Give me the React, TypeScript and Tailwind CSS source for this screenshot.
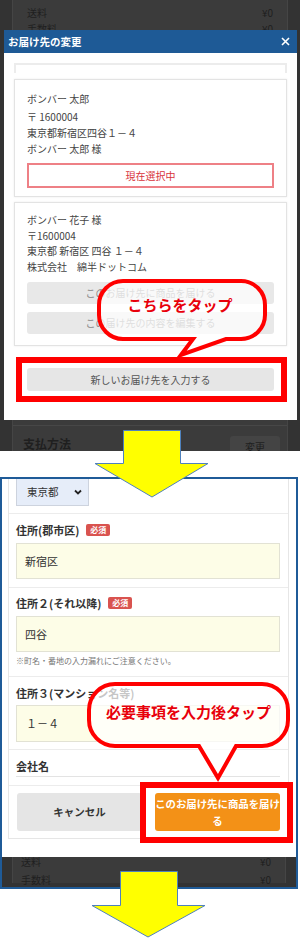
import React from 'react';

const jp = "font-['Noto_Sans_CJK_JP','Noto_Sans',sans-serif]";

function Badge() {
  return (
    <span className="ml-[7px] inline-flex items-center h-[12px] px-[4px] rounded-[2px] bg-[#d9534f] text-white text-[8px] font-bold leading-none">
      必須
    </span>
  );
}

function Field({ label, required, value, h = 36 }: { label: string; required?: boolean; value: string; h?: number }) {
  return (
    <>
      <div className="flex items-center h-[14px] text-[11px] leading-[14px] font-bold text-[#333]">
        {label}
        {required && <Badge />}
      </div>
      <div
        className="mt-[6px] flex items-center pl-[8px] bg-[#fdfde7] border border-[#e2e2d4] text-[11px] text-[#333]"
        style={{ height: h }}
      >
        {value}
      </div>
    </>
  );
}

function ModalPanel() {
  return (
    <div className="relative h-[451px] bg-[#333333] overflow-hidden">
      {/* page behind the overlay */}
      <div className="mx-[12px] h-full bg-[#3b3b3b] border-x border-[#454545] flex flex-col text-[#1f1f1f]">
        <div className="pt-[5px] px-[14px] text-[10px] leading-[16px]">
          <div className="flex justify-between"><span>送料</span><span>¥0</span></div>
          <div className="flex justify-between"><span>手数料</span><span>¥0</span></div>
        </div>
        <div className="flex-1" />
        <div className="h-[26px] border-t border-[#474747] flex items-start justify-between pl-[10px] pr-[7px] pt-[10px]">
          <span className="text-[12px] font-bold leading-[16px]">支払方法</span>
          <span className="w-[50px] h-[20px] bg-[#444] rounded-[3px] text-[10px] text-center leading-[22px]">変更</span>
        </div>
      </div>

      {/* modal */}
      <div className="absolute left-[4px] top-[30px] w-[293px] h-[390px] bg-white flex flex-col">
        <div className="h-[23px] bg-[#1e5a96] flex items-center justify-between pl-[4px] pr-[7px]">
          <span className="text-white text-[10.5px] font-bold">お届け先の変更</span>
          <svg width="9" height="9" viewBox="0 0 9 9" fill="none" stroke="white" strokeWidth="1.6">
            <path d="M1 1L8 8M8 1L1 8" />
          </svg>
        </div>
        <div className="px-[10px] pt-[10px] text-[10px] text-[#444]">
          <div className="h-[10px] border-t-2 border-x-2 border-[#ececec]" />

          <div className="mt-[6px] border border-[#e3e3e3] shadow-[0_0_2px_rgba(0,0,0,0.08)] pl-[12px] pr-[12px] pt-[11px] pb-[8px] leading-[16px]">
            <div className="mb-[2px]">ボンバー 太郎</div>
            <div>〒 1600004</div>
            <div>東京都新宿区四谷１－４</div>
            <div>ボンバー 太郎 様</div>
            <div className="mt-[6px] h-[25px] border-2 border-solid border-[#ee8086] flex items-center justify-center text-[#d8323a]">
              現在選択中
            </div>
          </div>

          <div className="mt-[5px] border border-[#e3e3e3] shadow-[0_0_2px_rgba(0,0,0,0.08)] pl-[12px] pr-[12px] pt-[9px] pb-[11px] leading-[15.5px]">
            <div>ボンバー 花子 様</div>
            <div>〒1600004</div>
            <div>東京都 新宿区 四谷 １－４</div>
            <div>株式会社　綿半ドットコム</div>
            <div className="mt-[8px] flex flex-col gap-[8px] text-[#8a8a8a]">
              <div className="h-[22px] bg-[#e8e8e8] rounded-[3px] flex items-center justify-center">このお届け先に商品を届ける</div>
              <div className="h-[22px] bg-[#e8e8e8] rounded-[3px] flex items-center justify-center">この届け先の内容を編集する</div>
            </div>
          </div>

          <div className="mx-[13px] mt-[22px] h-[23px] bg-[#e6e6e6] rounded-[3px] flex items-center justify-center text-[#555]">
            新しいお届け先を入力する
          </div>
        </div>
      </div>
    </div>
  );
}

function FormPanel() {
  return (
    <div className="mt-[26px] w-[298px] h-[412px] border-2 border-[#1f5b98] bg-white flex flex-col overflow-hidden">
      <div className="ml-[6px] mr-[7px] border-x border-b border-[#e6e6e6]">
        <div className="h-[35px] border-b border-[#ececec] px-[7px]">
          <div className="w-[73px] h-[27px] bg-[#e6edf9] border border-[#cdd3de] border-t-0 flex items-center justify-between pl-[10px] pr-[6px] text-[10.5px] text-[#333]">
            <span>東京都</span>
            <svg width="8" height="6" viewBox="0 0 8 6" fill="none" stroke="#222" strokeWidth="1.8">
              <path d="M1 1.5L4 4.5L7 1.5" />
            </svg>
          </div>
        </div>

        <div className="border-b border-[#ececec] pl-[7px] pr-[8px] pt-[9px] pb-[8px]">
          <Field label="住所(郡市区)" required value="新宿区" />
        </div>

        <div className="border-b border-[#ececec] pl-[7px] pr-[8px] pt-[8px] pb-[9px]">
          <Field label="住所２(それ以降)" required value="四谷" />
          <div className="mt-[3px] h-[12px] leading-[12px] text-[8px] text-[#777]">※町名・番地の入力漏れにご注意ください。</div>
        </div>

        <div className="border-b border-[#ececec] pl-[7px] pr-[8px] pt-[9px] pb-[7px]">
          <div className="flex items-center h-[14px] text-[11px] leading-[14px] font-bold text-[#333]">住所３(マンション名等)</div>
          <div className="mt-[5px] h-[37px] flex items-center pl-[9px] bg-[#fdfde7] border border-[#e2e2d4] text-[11px] text-[#333]">１－４</div>
        </div>

        <div className="border-b border-[#ececec] pl-[7px] pr-[8px] pt-[9px] pb-[8px]">
          <div className="h-[14px] text-[11px] leading-[14px] font-bold text-[#333]">会社名</div>
          <div className="mt-[3px] h-[1px] bg-[#e3e3e3]" />
        </div>

        <div className="flex gap-[13px] px-[8px] pt-[7px] pb-[7px]">
          <div className="flex-1 h-[38px] bg-[#e5e5e5] rounded-[3px] flex items-center justify-center text-[10.5px] font-bold text-[#333]">
            キャンセル
          </div>
          <div className="flex-1 h-[38px] bg-[#f39117] rounded-[3px] flex items-center justify-center text-center text-[10.4px] leading-[17px] font-bold text-white">
            このお届け先に商品を届ける
          </div>
        </div>
      </div>

      <div className="h-[18px]" />

      <div className="flex-1 bg-[#333333] overflow-hidden">
        <div className="mx-[10px] h-full bg-[#3b3b3b] border-x border-[#454545] px-[8px] -mt-[4px] text-[10px] leading-[18px] text-[#1f1f1f]">
          <div className="flex justify-between pr-[6px]"><span>送料</span><span>¥0</span></div>
          <div className="flex justify-between pr-[6px]"><span>手数料</span><span>¥0</span></div>
        </div>
      </div>
    </div>
  );
}

function Bubble({ x0, y0, x1, y1, r, tl, tr, tipX, tipY }: { x0: number; y0: number; x1: number; y1: number; r: number; tl: number; tr: number; tipX: number; tipY: number }) {
  const d = `M${x0 + r} ${y0} H${x1 - r} A${r} ${r} 0 0 1 ${x1} ${y0 + r} V${y1 - r} A${r} ${r} 0 0 1 ${x1 - r} ${y1} H${tr} L${tipX} ${tipY} L${tl} ${y1} H${x0 + r} A${r} ${r} 0 0 1 ${x0} ${y1 - r} V${y0 + r} A${r} ${r} 0 0 1 ${x0 + r} ${y0} Z`;
  return <path d={d} fill="white" fillOpacity="0.72" stroke="#ff0000" strokeWidth="4" strokeLinejoin="miter" />;
}

export default function App() {
  return (
    <div className={`relative w-[300px] h-[940px] bg-white overflow-hidden ${jp}`}>
      <ModalPanel />
      <FormPanel />

      {/* annotations */}
      <svg className="absolute inset-0 pointer-events-none" width="300" height="940" viewBox="0 0 300 940">
        <Bubble x0={99} y0={281} x1={265} y1={339} r={24} tl={193} tr={226} tipX={181} tipY={355} />
        <Bubble x0={89} y0={684} x1={288} y1={746} r={26} tl={199} tr={236} tipX={218} tipY={778} />
        <polygon points="123.5,430.5 180.5,430.5 180.5,463.5 208,463.5 152,497 95,463.5 123.5,463.5" fill="#ffff00" stroke="#4f81bd" strokeWidth="1" />
        <polygon points="120.5,871.5 177.5,871.5 177.5,905.5 205,905.5 148,937 92,905.5 120.5,905.5" fill="#ffff00" stroke="#4f81bd" strokeWidth="1" />
      </svg>
      <div className="absolute left-[16px] top-[357px] w-[271px] h-[45px] border-[6px] border-[#ff0000]" />
      <div className="absolute left-[140px] top-[782px] w-[153px] h-[61px] border-[6px] border-[#ff0000]" />
      <div className="absolute left-[95px] top-[296px] w-[170px] h-[18px] text-center text-[15px] leading-[18px] font-bold text-[#e8000b]">
        こちらをタップ
      </div>
      <div className="absolute left-[87px] top-[703px] w-[203px] h-[18px] text-center text-[15px] leading-[18px] font-bold text-[#e8000b]">
        必要事項を入力後タップ
      </div>
    </div>
  );
}
